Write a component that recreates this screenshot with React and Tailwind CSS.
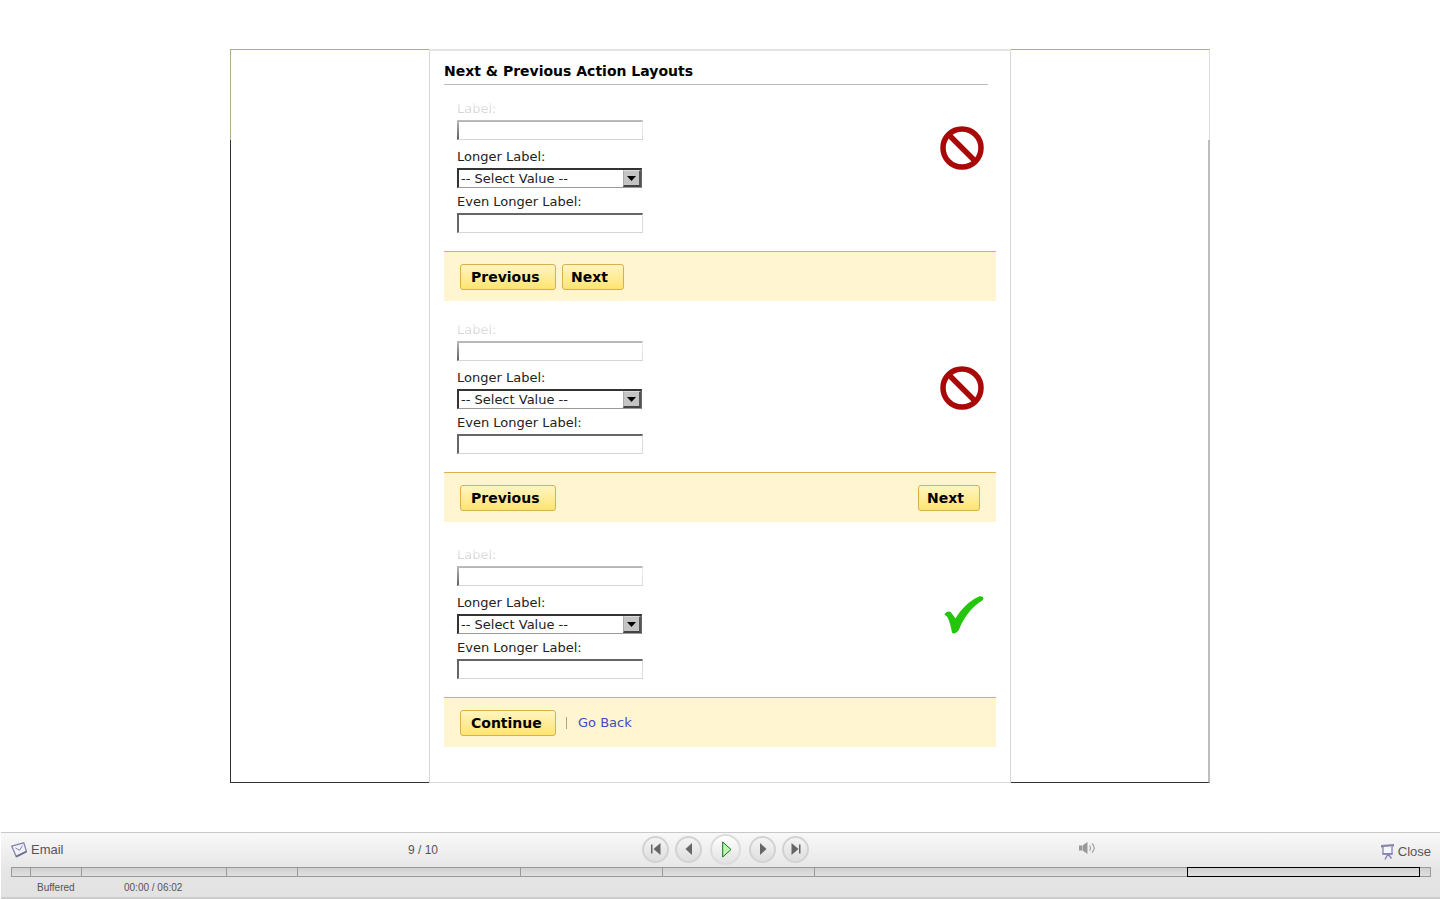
import React from "react";

function Field({ id, label, faded = false, children }) {
  return (
    <div
      className={
        faded
          ? "[mask-image:linear-gradient(to_bottom,rgba(0,0,0,0.08)_5%,rgba(0,0,0,0.22)_38%,rgba(0,0,0,0.5)_55%,black_95%)]"
          : ""
      }
    >
      <label htmlFor={id} className="mb-[2px] block text-[13px] leading-[18px] text-[#222]">
        {label}
      </label>
      {children}
    </div>
  );
}

const inputClass =
  "block h-5 w-[186px] border-t-2 border-r border-b border-l-2 border-t-[#666] border-r-[#ddd] border-b-[#d4d4d4] border-l-[#666] bg-white px-1 text-[13px] outline-none";

function FormFields({ prefix }) {
  return (
    <div className="w-[186px]">
      <Field id={`${prefix}-a`} label="Label:" faded>
        <input id={`${prefix}-a`} type="text" className={inputClass} />
      </Field>
      <div className="mt-2">
        <Field id={`${prefix}-b`} label="Longer Label:">
          <div className="relative w-[185px]">
            <select
              id={`${prefix}-b`}
              className="block h-5 w-full appearance-none border-t-2 border-r border-b border-l-2 border-t-[#333] border-r-[#666] border-b-[#999] border-l-[#333] bg-white pr-5 pl-[2px] text-[13px] leading-4 text-[#222] outline-none"
            >
              <option>-- Select Value --</option>
            </select>
            <span className="pointer-events-none absolute top-[2px] right-[1px] flex h-[17px] w-[18px] items-center justify-center border-t border-r-2 border-b-2 border-l border-t-[#ddd] border-r-[#555] border-b-[#444] border-l-[#aaa] bg-[#c4c4c4]">
              <svg width="9" height="5" viewBox="0 0 9 5" aria-hidden="true">
                <path d="M0 0h9L4.500 5z" fill="#000" />
              </svg>
            </span>
          </div>
        </Field>
      </div>
      <div className="mt-[5px]">
        <Field id={`${prefix}-c`} label="Even Longer Label:">
          <input id={`${prefix}-c`} type="text" className={inputClass} />
        </Field>
      </div>
    </div>
  );
}

function BanIcon() {
  return (
    <svg width="44" height="44" viewBox="0 0 44 44" role="img" aria-label="Not recommended">
      <circle cx="22" cy="22" r="19" fill="none" stroke="#a80808" strokeWidth="5.5" />
      <path d="M9 9l26 26" stroke="#a80808" strokeWidth="5.5" />
    </svg>
  );
}

function CheckIcon() {
  return (
    <svg width="40" height="40" viewBox="0 0 40 40" role="img" aria-label="Recommended">
      <path
        d="M0.500 18.500C2 15.500 5.500 14.500 7.500 17L11.500 22.500C17 13.500 25 5 34.500 0.800C37-.4 40 .8 39.300 3C38.800 4.800 36.500 5.300 34.500 7C26 13.500 19.500 22.500 15.500 32.500C14.600 35 11.500 38 9 37.500C7.500 37 7.800 34.500 7 31.500C5.800 27 4.500 22.500 3 20.500C2.200 19.500 1 19.800 0.500 18.500Z"
        fill="#24c60c"
      />
    </svg>
  );
}

function ActionButton({ children, className }) {
  return (
    <button
      type="button"
      className={`h-[26px] rounded-[3px] border border-[#d9b04c] bg-linear-to-b from-[#fff5c0] to-[#ffe46e] text-left text-sm leading-6 font-bold text-black ${className}`}
    >
      {children}
    </button>
  );
}

function ActionBar({ children }) {
  return (
    <div className="flex h-[50px] items-center border-t border-[#dfae55] bg-[#fff5d0] px-4 pt-px">
      {children}
    </div>
  );
}

function Example({ prefix, mark, children }) {
  return (
    <section>
      <div className="flex justify-between pr-3 pb-[18px] pl-[13px]">
        <FormFields prefix={prefix} />
        {mark}
      </div>
      <ActionBar>{children}</ActionBar>
    </section>
  );
}

function Slide() {
  return (
    <main className="mx-auto mt-[49px] flex w-full max-w-[980px] font-['DejaVu_Sans',Verdana,sans-serif]">
      <div className="flex flex-1 flex-col">
        <div className="h-[91px] border-t border-l border-[#a3b184]" />
        <div className="flex-1 border-b border-l border-[#333]" />
      </div>
      <article className="w-[582px] border border-t-2 border-[#d8d8d8] border-t-[#e4e4e4] pr-[14px] pb-[35px] pl-[14px]">
        <h1 className="mr-2 mb-[15px] border-b border-[#bbb] pt-[10px] pb-[3px] text-sm leading-5 font-bold text-black">
          Next &amp; Previous Action Layouts
        </h1>
        <div className="flex flex-col">
          <Example prefix="one" mark={<div className="pt-[26px]"><BanIcon /></div>}>
            <ActionButton className="w-24 pl-[10px]">Previous</ActionButton>
            <ActionButton className="ml-[6px] w-[62px] pl-2">Next</ActionButton>
          </Example>
          <div className="mt-5">
            <Example prefix="two" mark={<div className="pt-[45px]"><BanIcon /></div>}>
              <ActionButton className="w-24 pl-[10px]">Previous</ActionButton>
              <ActionButton className="ml-auto w-[62px] pl-2">Next</ActionButton>
            </Example>
          </div>
          <div className="mt-6">
            <Example prefix="three" mark={<div className="pt-[50px]"><CheckIcon /></div>}>
              <ActionButton className="w-24 pl-[10px]">Continue</ActionButton>
              <span className="ml-[10px] h-3 w-px bg-[#aaa28e]" />
              <a href="#back" className="ml-[11px] text-[13px] text-[#3d4bc6]">
                Go Back
              </a>
            </Example>
          </div>
        </div>
      </article>
      <div className="flex flex-1 flex-col">
        <div className="h-[91px] border-t border-r border-t-[#a3b184] border-r-[#ddd]" />
        <div className="flex-1 border-r-2 border-b border-r-[#bdbdbd] border-b-[#333]" />
      </div>
    </main>
  );
}

function RoundButton({ label, children }) {
  return (
    <button
      type="button"
      aria-label={label}
      className="flex size-[27px] items-center justify-center rounded-full border-2 border-[#d2d2d2] bg-linear-to-b from-[#f4f4f4] to-[#dedede]"
    >
      {children}
    </button>
  );
}

const segments = ["1", "2", "3", "4", "5", "6", "7", "8"];

function Player() {
  return (
    <footer className="ml-px border-t border-b-2 border-t-[#c8c8c8] border-b-[#ccc] bg-linear-to-b from-[#f8f8f8] via-[#e5e5e5] via-60% to-[#e2e2e2] pr-[9px] pl-[10px] font-['Liberation_Sans',Arial,sans-serif] text-[#555]">
      <div className="grid h-[34px] grid-cols-[397fr_234fr_437fr_352fr] items-center">
        <div>
          <button type="button" className="flex items-center gap-1 text-[13px] leading-4">
            <svg width="16" height="16" viewBox="0 0 16 16" aria-hidden="true">
              <path d="M0.800 4.200L12.800 0.800L15.500 9.500L5.200 14.600Z" fill="#f2f2fb" stroke="#8583ae" strokeWidth="1.300" />
              <path d="M4.500 6L8.500 8.300L11.500 3.500" fill="none" stroke="#8583ae" strokeWidth="1" />
              <path d="M5.200 14.600L15.500 9.500" stroke="#6f6d9a" strokeWidth="1.800" />
            </svg>
            Email
          </button>
        </div>
        <div className="text-xs leading-4">9 / 10</div>
        <div className="flex items-center gap-[6px] pb-[2px]">
          <RoundButton label="First">
            <svg width="10" height="12" viewBox="0 0 10 12" aria-hidden="true">
              <path d="M0 1.500h1.500v9H0zM9.500 0v12L2.500 6z" fill="#666" />
            </svg>
          </RoundButton>
          <RoundButton label="Previous">
            <svg width="8" height="12" viewBox="0 0 8 12" aria-hidden="true">
              <path d="M7 0v12L0.500 6z" fill="#666" />
            </svg>
          </RoundButton>
          <button
            type="button"
            aria-label="Play"
            className="mx-[2px] flex size-[31px] items-center justify-center rounded-full border-2 border-[#dcdcdc] bg-linear-to-b from-[#fff] to-[#e2e2e2]"
          >
            <svg width="10" height="17" viewBox="0 0 10 17" className="ml-[2px]" aria-hidden="true">
              <path d="M0.700 1v15L9 8.500z" fill="#b9fbb4" stroke="#167016" />
            </svg>
          </button>
          <RoundButton label="Next">
            <svg width="8" height="12" viewBox="0 0 8 12" aria-hidden="true">
              <path d="M1 0v12L7.500 6z" fill="#666" />
            </svg>
          </RoundButton>
          <RoundButton label="Last">
            <svg width="10" height="12" viewBox="0 0 10 12" aria-hidden="true">
              <path d="M8 1.500h1.500v9H8zM0.500 0v12L7.500 6z" fill="#666" />
            </svg>
          </RoundButton>
        </div>
        <div className="flex items-center justify-between">
          <button type="button" aria-label="Volume" className="pb-1">
            <svg width="17" height="12" viewBox="0 0 17 12" aria-hidden="true">
              <path d="M0 3.500h3v5H0zM3.500 3.500L8.500 0v12L3.500 8.500z" fill="#999" />
              <path d="M10.500 3.500Q12.500 6 10.500 8.500M13 1.500Q17.500 6 13 10.500" fill="none" stroke="#a0a0a0" strokeWidth="1.200" />
            </svg>
          </button>
          <button type="button" className="flex items-center gap-1 pt-[3px] text-[13px] leading-4">
            <svg width="13" height="16" viewBox="0 0 13 16" aria-hidden="true">
              <path d="M0 1L13 0v2.500L0 3.500z" fill="#8886a8" />
              <path d="M2 3v7h9V2.500" fill="#f5f5fd" stroke="#8583b4" strokeWidth="1.300" />
              <path d="M1.500 9.800h10M7 10L4 15.500M7 10L10.500 14.500" fill="none" stroke="#8583b4" strokeWidth="1.400" />
            </svg>
            Close
          </button>
        </div>
      </div>
      <div className="grid h-[10px] grid-cols-[19fr_51fr_145fr_71fr_223fr_142fr_153fr_372fr_233fr_11fr] border-y border-l border-[#999] bg-linear-to-b from-[#d0d0d0] to-[#e0e0e0]">
        {segments.map((n, i) => (
          <button
            key={n}
            type="button"
            aria-label={`Slide ${n}`}
            className={i === 7 ? "" : "border-r border-[#999]"}
          />
        ))}
        <button
          type="button"
          aria-label="Slide 9"
          aria-current="true"
          className="-my-px border border-black"
        />
        <button type="button" aria-label="Slide 10" className="border-r border-[#999]" />
      </div>
      <div className="flex h-5 items-center pt-[2px] pl-[26px] text-[10px] leading-3">
        <span className="w-[87px]">Buffered</span>
        <span>00:00 / 06:02</span>
      </div>
    </footer>
  );
}

export default function App() {
  return (
    <div className="flex min-h-screen flex-col justify-between bg-white pb-px">
      <Slide />
      <Player />
    </div>
  );
}
